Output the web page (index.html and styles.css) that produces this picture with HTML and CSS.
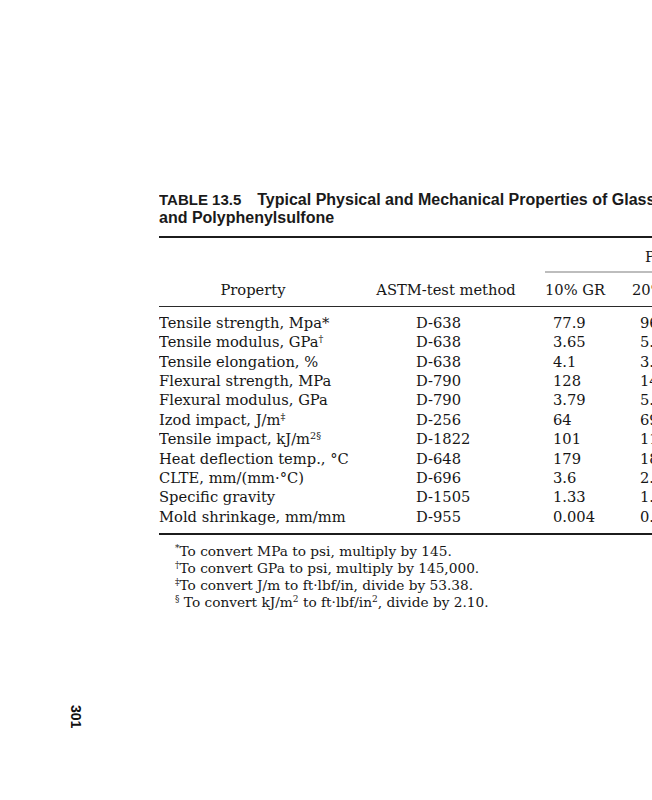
FILE: index.html
```html
<!DOCTYPE html>
<html lang="en">
<head>
<meta charset="utf-8">
<title>Table 13.5</title>
<link rel="stylesheet" href="styles.css">
</head>
<body>
<div class="page">
  <div class="margin">
    <div class="folio">301</div>
  </div>
  <div class="content">
    <h1 class="caption"><span class="label">TABLE 13.5</span><span class="title">Typical Physical and Mechanical Properties of Glass<br>and Polyphenylsulfone</span></h1>
    <table class="props">
      <colgroup>
        <col class="c-prop"><col class="c-astm"><col class="c-g1"><col class="c-g2">
      </colgroup>
      <thead>
        <tr class="span-row">
          <th></th><th></th><th class="group" colspan="2">PES</th>
        </tr>
        <tr class="head-row">
          <th class="h-prop">Property</th>
          <th class="h-astm">ASTM-test method</th>
          <th class="h-g1">10% GR</th>
          <th class="h-g2">20% GR</th>
        </tr>
      </thead>
      <tbody>
        <tr class="first"><td>Tensile strength, Mpa*</td><td class="m">D-638</td><td class="v1">77.9</td><td class="v2">96</td></tr>
        <tr><td>Tensile modulus, GPa<sup>†</sup></td><td class="m">D-638</td><td class="v1">3.65</td><td class="v2">5.7</td></tr>
        <tr><td>Tensile elongation, %</td><td class="m">D-638</td><td class="v1">4.1</td><td class="v2">3.2</td></tr>
        <tr><td>Flexural strength, MPa</td><td class="m">D-790</td><td class="v1">128</td><td class="v2">14</td></tr>
        <tr><td>Flexural modulus, GPa</td><td class="m">D-790</td><td class="v1">3.79</td><td class="v2">5.5</td></tr>
        <tr><td>Izod impact, J/m<sup>‡</sup></td><td class="m">D-256</td><td class="v1">64</td><td class="v2">69</td></tr>
        <tr><td>Tensile impact, kJ/m<sup>2§</sup></td><td class="m">D-1822</td><td class="v1">101</td><td class="v2">11</td></tr>
        <tr><td>Heat deflection temp., °C</td><td class="m">D-648</td><td class="v1">179</td><td class="v2">18</td></tr>
        <tr><td>CLTE, mm/(mm·°C)</td><td class="m">D-696</td><td class="v1">3.6</td><td class="v2">2.7</td></tr>
        <tr><td>Specific gravity</td><td class="m">D-1505</td><td class="v1">1.33</td><td class="v2">1.4</td></tr>
        <tr class="last"><td>Mold shrinkage, mm/mm</td><td class="m">D-955</td><td class="v1">0.004</td><td class="v2">0.0</td></tr>
      </tbody>
    </table>
    <div class="notes">
      <p><sup>*</sup>To convert MPa to psi, multiply by 145.</p>
      <p><sup>†</sup>To convert GPa to psi, multiply by 145,000.</p>
      <p><sup>‡</sup>To convert J/m to ft·lbf/in, divide by 53.38.</p>
      <p><sup>§</sup> To convert kJ/m<sup>2</sup> to ft·lbf/in<sup>2</sup>, divide by 2.10.</p>
    </div>
  </div>
</div>
</body>
</html>
```
FILE: styles.css
```css
html, body {
  margin: 0;
  padding: 0;
  background: #ffffff;
  overflow: hidden;
}
body {
  color: #161616;
  font-family: "DejaVu Serif", "Liberation Serif", serif;
}
.page {
  display: flex;
  width: 652px;
  height: 800px;
  overflow: hidden;
}
.margin {
  width: 159px;
  flex: none;
  padding-top: 705px;
  box-sizing: border-box;
  padding-left: 69px;
}
.folio {
  writing-mode: vertical-rl;
  font-family: "Liberation Sans", Arial, sans-serif;
  font-weight: bold;
  font-size: 14px;
  line-height: 14px;
  color: #111;
}
.content {
  flex: none;
  width: 493px;
  padding-top: 191px;
  overflow: hidden;
}
.caption {
  margin: 0;
  font-family: "Liberation Sans", Arial, sans-serif;
  font-weight: bold;
  font-size: 16px;
  line-height: 18px;
  color: #1a1a1a;
  white-space: nowrap;
}
.caption .label {
  font-size: 15px;
  margin-right: 16px;
}
.props {
  margin-top: 9px;
  border-collapse: collapse;
  table-layout: fixed;
  width: 500px;
  border-top: 2px solid #1c1c1c;
  border-bottom: 2px solid #1c1c1c;
  font-size: 14.7px;
  line-height: 19.4px;
}
.c-prop { width: 188px; }
.c-astm { width: 198px; }
.c-g1 { width: 87px; }
.c-g2 { width: 27px; }
.props th, .props td {
  padding: 0;
  font-weight: normal;
  white-space: nowrap;
  text-align: left;
  vertical-align: baseline;
}
.span-row th {
  padding-top: 9px;
  padding-bottom: 5px;
}
.span-row .group {
  border-bottom: 2px solid #bdbdbd;
  padding-left: 100px;
}
.head-row th {
  padding-top: 7px;
  padding-bottom: 6px;
  border-bottom: 1px solid #2a2a2a;
}
.head-row .h-prop, .head-row .h-astm {
  text-align: center;
}
.props tbody tr.first td { padding-top: 6px; }
.props tbody tr.last td { padding-bottom: 7px; }
.props td.m { padding-left: 69px; }
.props td.v1 { padding-left: 8px; }
.props td.v2 { padding-left: 8px; }
.props sup, .notes sup {
  font-size: 0.66em;
  line-height: 0;
  vertical-align: 0.5em;
}
.notes {
  padding-left: 16px;
  padding-top: 8px;
  font-size: 13.7px;
  line-height: 17px;
}
.notes p {
  margin: 0;
  white-space: nowrap;
}
```
